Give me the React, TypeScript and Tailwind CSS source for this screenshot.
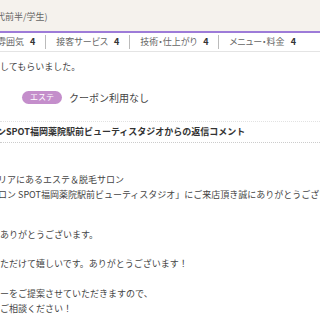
import React from 'react';

const ratings = [
  { label: '雰囲気', score: 4 },
  { label: '接客サービス', score: 4 },
  { label: '技術・仕上がり', score: 4 },
  { label: 'メニュー・料金', score: 4 },
];

const font = "font-['Noto_Sans_CJK_JP','Liberation_Sans',sans-serif]";

export default function App() {
  return (
    <div className={`w-[320px] h-[320px] overflow-hidden bg-white text-[9px] text-[#444] ${font}`}>
      {/* reviewer header */}
      <div className="h-[31px] bg-[#f5f2ed] flex items-end pb-[8px] overflow-hidden">
        <span className="-ml-[4px] whitespace-nowrap text-[#666]">代前半/学生)</span>
      </div>
      <div className="h-[2px] bg-[#9d7bd8]" />

      {/* ratings */}
      <div className="h-[19px] flex items-center border-b border-[#e4e4e4] whitespace-nowrap overflow-hidden [font-feature-settings:'palt']">
        {ratings.map((r, i) => (
          <div key={r.label} className="flex items-center">
            {i > 0 && <span className="w-px h-[14px] bg-[#bbb] mx-[10px]" />}
            <span className={`text-[#666] ${i === 0 ? '-ml-[3px]' : ''}`}>{r.label}</span>
            <span className="ml-[6px] font-bold text-[#333]">{r.score}</span>
          </div>
        ))}
      </div>

      {/* review body */}
      <div className="pt-[8px] whitespace-nowrap">してもらいました。</div>
      <div className="mt-[16px] flex items-center whitespace-nowrap">
        <span className="ml-[22px] w-[40px] h-[13px] rounded-full bg-[#c48ecb] text-white text-[8px] flex items-center justify-center">
          エステ
        </span>
        <span className="ml-[7px] text-[10px]">クーポン利用なし</span>
      </div>

      {/* salon reply */}
      <div className="mt-[16px] h-[22px] border-t border-[#e2e2e2] border-b border-b-[#ccc] border-dotted flex items-center whitespace-nowrap overflow-hidden">
        <span className="-ml-[3px] font-bold text-[#333]">ンSPOT福岡薬院駅前ビューティスタジオからの返信コメント</span>
      </div>

      <div className="whitespace-nowrap overflow-hidden leading-[15px]">
        <div className="mt-[29px] -ml-[2px]">リアにあるエステ＆脱毛サロン</div>
        <div className="-ml-[2px]">ロン SPOT福岡薬院駅前ビューティスタジオ」にご来店頂き誠にありがとうございます。</div>
        <div className="mt-[25px]">ありがとうございます。</div>
        <div className="mt-[14px]">ただけて嬉しいです。ありがとうございます！</div>
        <div className="mt-[15px]">ーをご提案させていただきますので、</div>
        <div>ご相談ください！</div>
      </div>
      <div className="mt-[4px] h-px bg-[#ececec]" />
    </div>
  );
}
